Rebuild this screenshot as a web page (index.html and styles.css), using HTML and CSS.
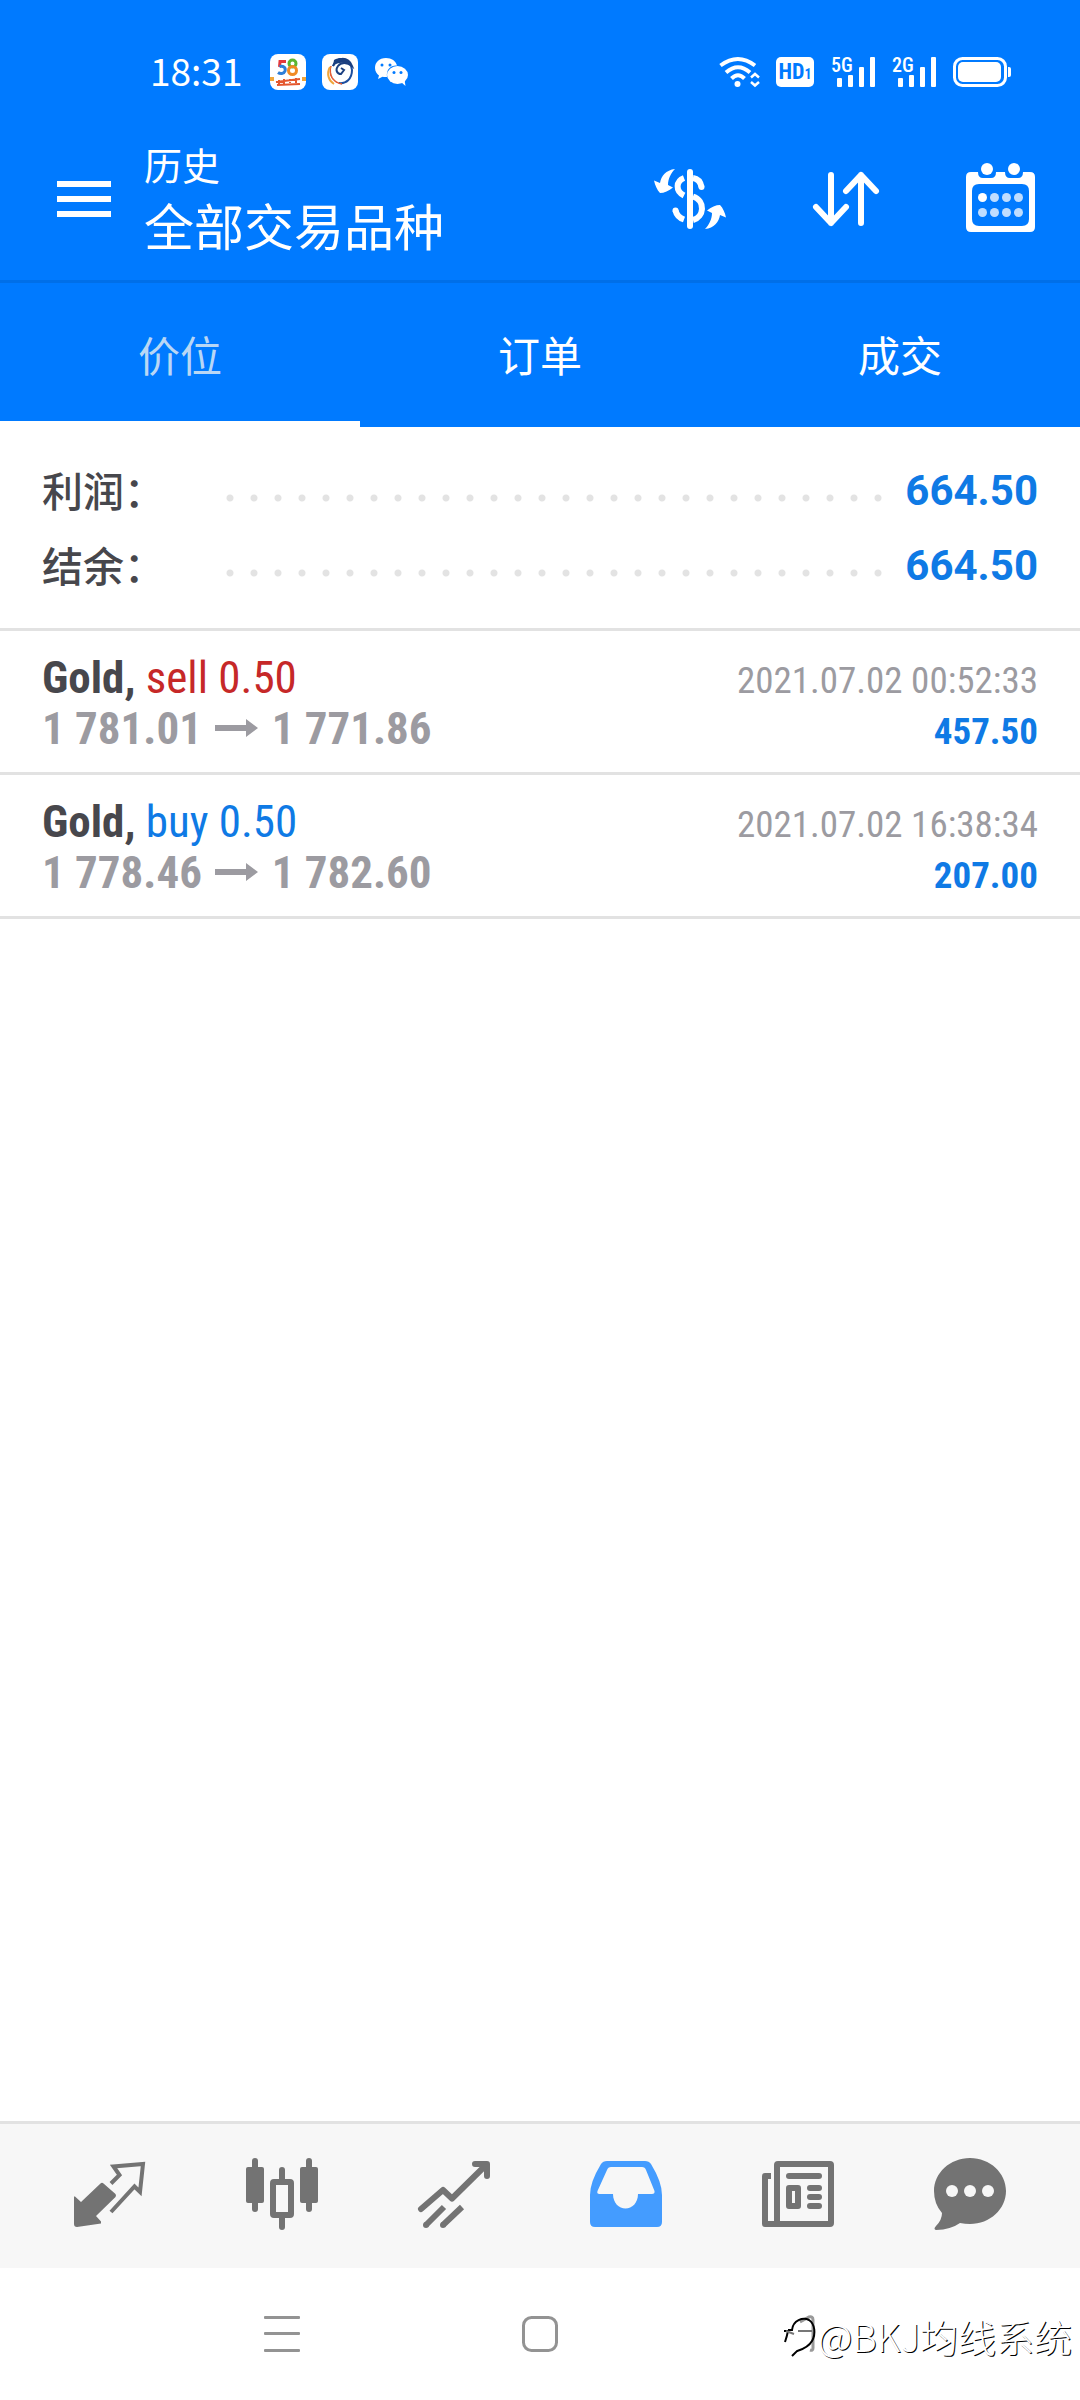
FILE: index.html
```html
<!DOCTYPE html>
<html lang="zh-CN">
<head>
<meta charset="utf-8">
<meta name="viewport" content="width=device-width, initial-scale=1">
<title>历史</title>
<link rel="stylesheet" href="styles.css">
</head>
<body>
<div class="app">
  <div class="status">
    <time class="clock">18:31</time>
    <svg class="app-icon" width="36" height="36" viewBox="0 0 36 36" aria-hidden="true">
      <rect width="36" height="36" rx="8" fill="#fff"/>
      <path d="M16 7.500H10L9.500 13" fill="none" stroke="#e5383b" stroke-width="3"/>
      <path d="M9.500 12.500c4-1 6.500 1 5.500 4.500-1 3-5 3-7 1.500" fill="none" stroke="#2f7fd8" stroke-width="3"/>
      <circle cx="22.500" cy="9.500" r="3.500" fill="none" stroke="#5cb531" stroke-width="3"/>
      <circle cx="22.500" cy="16.500" r="4" fill="none" stroke="#f08a24" stroke-width="3"/>
      <path d="M0 23h4v4H0zM32 23h4v4h-4z" fill="#f0a63a"/>
      <path d="M6 28l24-3M7 31l23-1M9 26v5M14 25v5M20 25v4M26 24v5" fill="none" stroke="#e4572e" stroke-width="2"/>
    </svg>
    <svg class="app-icon" width="36" height="36" viewBox="0 0 36 36" aria-hidden="true">
      <rect width="36" height="36" rx="8" fill="#fff"/>
      <path d="M11 12C15 3 29 4 30 16c0 9-6 14-13 13" fill="none" stroke="#1d4e9e" stroke-width="2"/>
      <path d="M11 12C14 3 26 2 30 12 25 8 19 8 16 12c-3 4-1 8 3 8l3-4-3-2" fill="none" stroke="#1b3f80" stroke-width="2"/>
      <path d="M12 6C21 1 29 6 30 13 25 8 17 7 11 12z" fill="#1b3f80"/>
      <path d="M9 12c-3 8 1 17 11 18-9-2-13-9-11-18z" fill="#e4572e" stroke="#e4572e"/>
      <path d="M8 13c-4 7-1 14 4 17" fill="none" stroke="#f0a63a" stroke-width="2"/>
    </svg>
    <svg class="wechat" width="36" height="36" viewBox="0 0 36 36" aria-hidden="true">
      <path d="M12 4C5 4 1 8.500 1 14c0 3.500 2 6 4 7.500L4 25l4.500-2.300c1.500.4 3 .5 4.500.3C12 15 17 11 23 11.500 22 7 17.500 4 12 4z" fill="#fff"/>
      <ellipse cx="23.500" cy="21" rx="10.500" ry="9" fill="#fff"/>
      <path d="M27 28l4.500 4-1-6z" fill="#fff"/>
      <circle cx="8" cy="11" r="1.500" fill="#007aff"/><circle cx="16" cy="11" r="1.500" fill="#007aff"/>
      <circle cx="20" cy="18.500" r="1.500" fill="#007aff"/><circle cx="27" cy="18.500" r="1.500" fill="#007aff"/>
    </svg>
    <div class="signals">
      <svg width="40" height="30" viewBox="0 0 40 30" fill="none" stroke="#fff" stroke-width="4" aria-label="Wi-Fi">
        <path d="M1.500 8.500Q19 -4.500 36 8.500M7 15.500Q19 5 31 15.500M12.500 21.500Q19 15 25.500 21.500"/>
        <circle cx="18.500" cy="27" r="3" fill="#fff" stroke="none"/>
        <path d="M32 20.500l4-3.500 4 3.500M32 25l4 3.500 4-3.500" stroke-width="2.500"/>
      </svg>
      <span class="hd">HD<small>1</small></span>
      <span class="cell">
        <b>5G</b>
        <svg width="44" height="30" viewBox="0 0 44 30" fill="#fff" aria-hidden="true"><rect x="6" y="21" width="5" height="9" rx="1"/><rect x="17" y="18" width="5" height="12" rx="1"/><rect x="28" y="10" width="5" height="20" rx="1"/><rect x="39" width="5" height="30" rx="1"/></svg>
      </span>
      <span class="cell">
        <b>2G</b>
        <svg width="44" height="30" viewBox="0 0 44 30" fill="#fff" aria-hidden="true"><rect x="6" y="21" width="5" height="9" rx="1"/><rect x="17" y="18" width="5" height="12" rx="1"/><rect x="28" y="10" width="5" height="20" rx="1"/><rect x="39" width="5" height="30" rx="1"/></svg>
      </span>
      <svg width="58" height="30" viewBox="0 0 58 30" aria-label="Battery">
        <rect x="1.500" y="1.500" width="51" height="27" rx="8" fill="none" stroke="#fff" stroke-width="3"/>
        <rect x="5" y="5" width="43" height="20" rx="5" fill="#fff"/>
        <path d="M55 10h1q2 0 2 2v6q0 2-2 2h-1z" fill="#fff"/>
      </svg>
    </div>
  </div>

  <header class="toolbar">
    <button class="icon-btn menu" aria-label="菜单">
      <svg width="54" height="36" viewBox="0 0 54 36" fill="#fff"><path d="M0 0h54v6H0zM0 15h54v6H0zM0 30h54v6H0z"/></svg>
    </button>
    <div class="titles">
      <h1>历史</h1>
      <p>全部交易品种</p>
    </div>
    <div class="actions">
      <button class="icon-btn" aria-label="品种">
        <svg width="72" height="72" viewBox="0 0 72 72">
          <rect x="33" y="6" width="6" height="60" rx="3" fill="#fff"/>
          <path d="M30 15C22 18 21 28 30 32.500M39 15Q46 16 47.500 24M39 33.500C52 38 50 54 39 57M21.500 47.500Q23 54 30 56.500" fill="none" stroke="#fff" stroke-width="6"/>
          <circle cx="47.500" cy="24" r="3" fill="#fff"/><circle cx="21.500" cy="47.500" r="3" fill="#fff"/>
          <path id="swap" d="M21 6C12 7 7 13 6 20L0 17.500C1 22 3 27 6 30 10 30 15 28 19 24.500L14 22C14 16 17 10 21 6z" fill="#fff"/>
          <use href="#swap" transform="rotate(180 36 36)"/>
        </svg>
      </button>
      <button class="icon-btn" aria-label="排序">
        <svg width="72" height="72" viewBox="0 0 72 72" fill="none" stroke="#fff" stroke-width="6" stroke-linecap="round" stroke-linejoin="round">
          <path d="M21 12v48M6 44l15 16 15-16M51 60V12M36 28l15-16 15 16"/>
        </svg>
      </button>
      <button class="icon-btn" aria-label="日期">
        <svg width="72" height="72" viewBox="0 0 72 72">
          <path fill="#fff" fill-rule="evenodd" d="M5 9h7q0 6 5 6h8q5 0 5-6h9q0 6 5 6h8q5 0 5-6h7q5 0 5 5v50q0 5-5 5H5q-5 0-5-5V14q0-5 5-5zM13 21q-7 0-7 7v28q0 7 7 7h43q7 0 7-7V28q0-7-7-7z"/>
          <g fill="#fff"><circle cx="21" cy="6" r="6"/><circle cx="48" cy="6" r="6"/><circle cx="16.500" cy="34.500" r="4.500"/></g>
          <g fill="#fff" opacity=".75"><circle cx="28.500" cy="34.500" r="4.500"/><circle cx="40.500" cy="34.500" r="4.500"/><circle cx="52.500" cy="34.500" r="4.500"/><circle cx="16.500" cy="49.500" r="4.500"/><circle cx="28.500" cy="49.500" r="4.500"/><circle cx="40.500" cy="49.500" r="4.500"/><circle cx="52.500" cy="49.500" r="4.500"/></g>
        </svg>
      </button>
    </div>
  </header>

  <div class="tabs" role="tablist">
    <button class="tab active" role="tab" aria-selected="true">价位</button>
    <button class="tab" role="tab" aria-selected="false">订单</button>
    <button class="tab" role="tab" aria-selected="false">成交</button>
  </div>

  <main class="content">
    <dl class="summary">
      <div class="sum-row"><dt>利润：</dt><dd>664.50</dd></div>
      <div class="sum-row"><dt>结余：</dt><dd>664.50</dd></div>
    </dl>
    <ul class="trades">
      <li class="trade">
        <div class="line"><span class="deal"><b>Gold,</b> <span class="sell">sell 0.50</span></span><time class="date">2021.07.02 00:52:33</time></div>
        <div class="line"><span class="price">1 781.01 <svg class="to" width="43" height="18" viewBox="0 0 43 18" aria-label="→"><path d="M0 6h31V0l12 9-12 9v-6H0z"/></svg> 1 771.86</span><span class="profit">457.50</span></div>
      </li>
      <li class="trade">
        <div class="line"><span class="deal"><b>Gold,</b> <span class="buy">buy 0.50</span></span><time class="date">2021.07.02 16:38:34</time></div>
        <div class="line"><span class="price">1 778.46 <svg class="to" width="43" height="18" viewBox="0 0 43 18" aria-label="→"><path d="M0 6h31V0l12 9-12 9v-6H0z"/></svg> 1 782.60</span><span class="profit">207.00</span></div>
      </li>
    </ul>
  </main>

  <nav class="bottom">
    <a href="#quotes" aria-label="行情">
      <svg width="72" height="72" viewBox="0 2 72 72">
        <path d="M26.500 25.500q1.500-1.500 3 0L41.500 36q1 1.500 0 3L22 58l5 5.500v2L3 69q-3 0-3-3V38.500h1L7 44z" fill="#737373"/>
        <path d="M37 25.500L45.500 17 39.500 8.500 69 6 66 34 60.500 28.500 37 54" fill="none" stroke="#737373" stroke-width="4"/>
      </svg>
    </a>
    <a href="#charts" aria-label="图表">
      <svg width="72" height="72" viewBox="0 2 72 72" fill="#737373">
        <rect y="9" width="18" height="36" rx="2"/><rect x="6" width="6" height="54" rx="3"/>
        <rect x="54" y="9" width="18" height="36" rx="2"/><rect x="60" width="6" height="54" rx="3"/>
        <rect x="33" y="9" width="6" height="16" rx="3"/><rect x="33" y="56" width="6" height="16" rx="3"/>
        <rect x="27" y="24" width="18" height="33" rx="1" fill="none" stroke="#737373" stroke-width="6"/>
      </svg>
    </a>
    <a href="#trade" aria-label="交易">
      <svg width="72" height="72" viewBox="0 2 72 72" fill="none" stroke="#737373" stroke-width="6" stroke-linejoin="round">
        <path d="M3 51L25 32 34 40.500 68 7M57 6H69V18" stroke-linecap="round"/>
        <path d="M8 67L26 49M25 67L44 49"/><circle cx="8" cy="67" r="3" fill="#737373" stroke="none"/><circle cx="25" cy="67" r="3" fill="#737373" stroke="none"/>
      </svg>
    </a>
    <a href="#history" aria-label="历史" aria-current="page">
      <svg width="72" height="72" viewBox="0 2 72 72">
        <path fill="#449cff" fill-rule="evenodd" d="M17 3h38q4 0 6 3 11 18 11 31v27q0 5-5 5H5q-5 0-5-5V37Q0 24 11 6q2-3 6-3zM21 9q-3 0-4 3L7.500 33q-1 3 2 3H23c0 9 6 14.500 12.500 14.500S48 45 48 36h14q3 0 2.500-3L56 12q-1-3-4-3z"/>
      </svg>
    </a>
    <a href="#news" aria-label="新闻">
      <svg width="72" height="72" viewBox="0 2 72 72" fill="#737373">
        <rect x="15" y="6" width="54" height="60" rx="1" fill="none" stroke="#737373" stroke-width="6"/>
        <path d="M9 15H3q-3 0-3 3v48q0 3 3 3h15v-6H6V21h3z"/>
        <rect x="24" y="15" width="36" height="6" rx="3"/>
        <path fill-rule="evenodd" d="M27 27h9q3 0 3 3v18q0 3-3 3h-9q-3 0-3-3V30q0-3 3-3zM30 33v12h3V33z"/>
        <rect x="45" y="27" width="15" height="6" rx="3"/><rect x="45" y="36" width="15" height="6" rx="3"/><rect x="45" y="45" width="15" height="6" rx="3"/>
      </svg>
    </a>
    <a href="#messages" aria-label="消息">
      <svg width="72" height="72" viewBox="0 2 72 72">
        <path d="M36 0C56 0 72 15 72 33S56 66 36 66q-5 0-10-1Q17 71.500 2 72q-3-1 0-4 6-6 6-13Q0 46 0 33C0 15 16 0 36 0z" fill="#737373"/>
        <g fill="#f7f7f7"><circle cx="18" cy="33" r="6"/><circle cx="36" cy="33" r="6"/><circle cx="54" cy="33" r="6"/></g>
      </svg>
    </a>
  </nav>

  <footer class="system">
    <button class="icon-btn" aria-label="最近任务"><svg width="36" height="36" viewBox="0 0 36 36" fill="#939393"><rect width="36" height="3" rx="1"/><rect y="16" width="36" height="3" rx="1"/><rect y="33" width="36" height="3" rx="1"/></svg></button>
    <button class="icon-btn" aria-label="主屏幕"><svg width="36" height="36" viewBox="0 0 36 36"><rect x="1.500" y="1.500" width="33" height="33" rx="8" fill="none" stroke="#939393" stroke-width="3"/></svg></button>
    <button class="icon-btn" aria-label="返回"><svg width="36" height="36" viewBox="0 0 36 36"><path d="M20 6L29 1q4-1 4 3v28q0 3-3 2" fill="none" stroke="#999" stroke-width="3"/></svg></button>
    <div class="watermark">
      <svg width="34" height="48" viewBox="0 0 34 48" fill="none" aria-hidden="true">
        <path d="M1 30Q3 24 4 19H0M4 18H8C9 8 19 5 25 8 31 12 32 22 28 29 24 36 16 38 13 39L8 44" stroke="#000" stroke-width="2"/>
        <path d="M2 19l8 3M14 19h14" stroke="#777" stroke-width="2"/>
      </svg>
      <span>@BKJ均线系统</span>
    </div>
  </footer>
</div>
</body>
</html>
```

FILE: styles.css
```css
* {
  box-sizing: border-box;
}

body,
h1,
p,
dl,
dd,
ul {
  margin: 0;
  padding: 0;
}

body {
  background: #fff;
  color: #47474c;
  font-family: "Noto Sans CJK SC", sans-serif;
}

svg {
  display: block;
  overflow: visible;
}

.app {
  display: flex;
  flex-direction: column;
  min-height: 100vh;
}

.icon-btn {
  padding: 0;
  border: 0;
  background: none;
}

/* Device status bar */
.status {
  display: flex;
  align-items: center;
  height: 118px;
  padding: 26px 69px 0 150px;
  background: #007aff;
  color: #fff;
}

.clock {
  width: 120px;
  padding-bottom: 4px;
  font-size: 37px;
  line-height: 48px;
}

.app-icon {
  margin-right: 16px;
}

.signals {
  display: flex;
  align-items: center;
  gap: 17px;
  margin-left: auto;
}

.hd {
  width: 38px;
  height: 30px;
  border-radius: 5px;
  background: #fff;
  color: #007aff;
  font: 700 22px/30px "Roboto Condensed", "Liberation Sans Narrow", sans-serif;
  text-align: center;
}

.hd small {
  font-size: 14px;
}

.cell {
  position: relative;
}

.cell b {
  position: absolute;
  top: -2px;
  left: 0;
  font: 500 20px/20px "Roboto Condensed", "Liberation Sans Narrow", sans-serif;
}

/* Title bar */
.toolbar {
  display: flex;
  align-items: center;
  height: 162px;
  padding: 0 42px 0 57px;
  background: #007aff;
  color: #fff;
}

.titles {
  margin-left: 33px;
  padding-bottom: 6px;
}

.titles h1 {
  font-size: 38px;
  font-weight: 400;
  line-height: 56px;
}

.titles p {
  font-size: 50px;
  line-height: 64px;
}

.actions {
  display: flex;
  gap: 84px;
  margin-left: auto;
}

/* Tabs */
.tabs {
  display: flex;
  border-top: 3px solid #006fe8;
  background: #007aff;
}

.tab {
  flex: 1;
  height: 144px;
  padding: 4px 0 0;
  border: 0;
  border-bottom: 6px solid transparent;
  background: none;
  color: #fff;
  font: 400 42px/60px "Noto Sans CJK SC", sans-serif;
}

.tab.active {
  border-color: #fff;
  color: #b9d7f5;
}

/* Totals */
.content {
  flex: 1;
}

.summary {
  padding: 26px 42px 25px;
  border-bottom: 3px solid #e2e2e2;
}

.sum-row {
  display: flex;
  align-items: center;
  height: 75px;
}

.sum-row dt {
  width: 176px;
  padding-bottom: 4px;
  font-size: 41px;
  font-weight: 500;
  line-height: 60px;
}

.sum-row dd {
  display: flex;
  flex: 1;
  align-items: center;
  color: #0f7ae5;
  font: 700 42px/60px Roboto, sans-serif;
}

.sum-row dd::before {
  content: "";
  flex: 1;
  height: 8px;
  margin: 14px 16px 0 0;
  background: radial-gradient(circle, #e3e3e3 3px, transparent 4px) 0 0 / 24px 8px repeat-x;
}

/* Closed positions */
.trades {
  list-style: none;
  font-family: "Roboto Condensed", "Liberation Sans Narrow", Roboto, sans-serif;
}

.trade {
  padding: 21px 42px 18px;
  border-bottom: 3px solid #e2e2e2;
}

.line {
  display: flex;
  align-items: baseline;
  justify-content: space-between;
  height: 51px;
  font-size: 45px;
  line-height: 51px;
  white-space: nowrap;
}

.sell {
  color: #c62828;
}

.buy,
.profit {
  color: #0f7ae5;
}

.price {
  color: #9c9ba1;
  font-weight: 700;
}

.to {
  display: inline-block;
  margin: 0 3px 7px;
  fill: #9c9ba1;
}

.date,
.profit {
  font-size: 37px;
}

.date {
  color: #9c9ba1;
}

.profit {
  font-weight: 700;
}

/* App navigation */
.bottom {
  display: flex;
  padding: 0 24px;
  border-top: 3px solid #e2e2e2;
  background: #f7f7f7;
}

.bottom a {
  display: flex;
  flex: 1;
  align-items: center;
  justify-content: center;
  height: 144px;
}

/* Device navigation */
.system {
  position: relative;
  display: flex;
  align-items: center;
  justify-content: center;
  gap: 222px;
  height: 132px;
}

.system .icon-btn {
  width: 36px;
}

.watermark {
  position: absolute;
  right: 8px;
  bottom: 37px;
  display: flex;
  align-items: center;
  color: #fff;
  font-size: 38px;
  font-weight: 300;
  line-height: 54px;
  text-shadow: 1px 1px 0 #000;
  white-space: nowrap;
}
```
